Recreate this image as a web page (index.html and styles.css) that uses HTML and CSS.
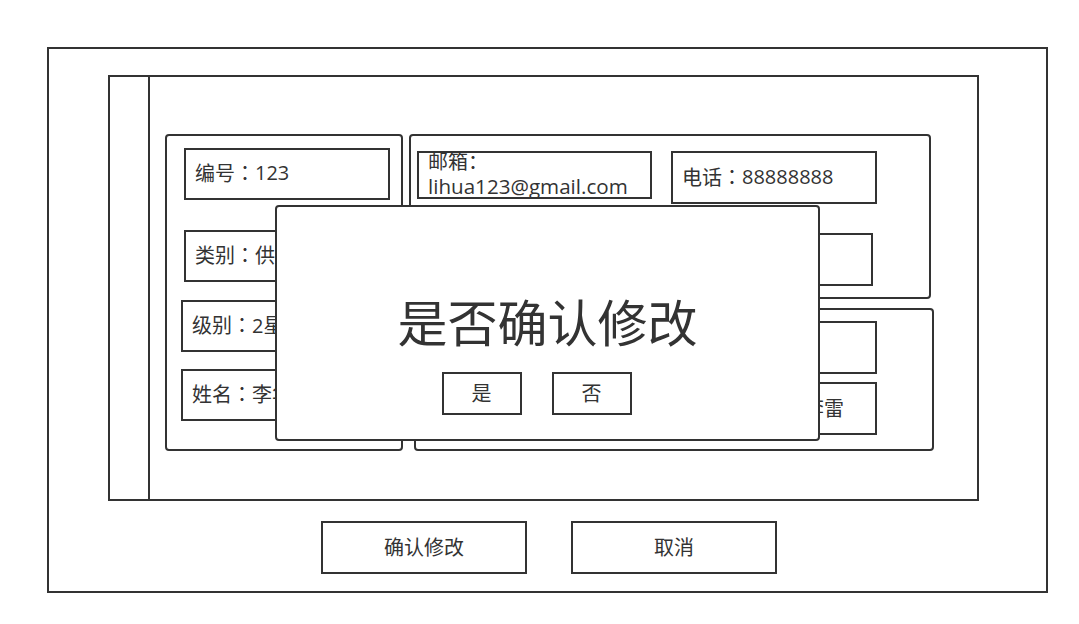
FILE: index.html
```html
<!DOCTYPE html>
<html lang="zh-CN">
<head>
<meta charset="utf-8">
<title>确认修改</title>
<link rel="stylesheet" href="styles.css">
</head>
<body>
<div class="frame">
  <div class="window">
    <div class="sidebar"></div>
    <div class="content">
      <div class="panel panel-left">
        <div class="field f1">编号<span class="colon">：</span>123</div>
        <div class="field f2">类别<span class="colon">：</span>供应商</div>
        <div class="field f3">级别<span class="colon">：</span>2星</div>
        <div class="field f4">姓名<span class="colon">：</span>李华</div>
      </div>
      <div class="right-col">
        <div class="panel panel-top">
          <div class="row">
            <div class="field field-email"><span class="two-line">邮箱<span class="colon">：</span><br><span class="mail">lihua123@gmail.com</span></span></div>
            <div class="field field-phone">电话<span class="colon">：</span>88888888</div>
          </div>
          <div class="field field-addr">地址<span class="colon">：</span>北京</div>
        </div>
        <div class="panel panel-bottom">
          <div class="field field-b1">公司<span class="colon">：</span>XX</div>
          <div class="field field-b2">联系人姓名<span class="colon">：</span>李雷</div>
        </div>
      </div>
    </div>
  </div>
  <div class="actions">
    <div class="btn">确认修改</div>
    <div class="btn">取消</div>
  </div>
  <div class="dialog">
    <div class="dialog-title">是否确认修改</div>
    <div class="dialog-buttons">
      <div class="dbtn">是</div>
      <div class="dbtn">否</div>
    </div>
  </div>
</div>
</body>
</html>
```

FILE: styles.css
```css
* { box-sizing: border-box; }
html, body { margin: 0; padding: 0; background: #fff; }
body {
  width: 1079px;
  height: 624px;
  font-family: "Open Sans", "Noto Sans CJK SC", sans-serif;
  color: #333;
  overflow: hidden;
}
.colon {
  font-family: "Noto Sans CJK TC", "Noto Sans CJK SC", sans-serif;
}
.frame {
  position: relative;
  margin: 47px 0 0 47px;
  width: 1001px;
  height: 546px;
  border: 2px solid #333;
}
.window {
  display: flex;
  margin: 26px 0 0 59px;
  width: 871px;
  height: 426px;
  border: 2px solid #333;
}
.sidebar {
  width: 40px;
  flex: none;
  border-right: 2px solid #333;
}
.content {
  display: flex;
  align-items: flex-start;
  padding: 57px 0 0 15px;
}
.panel {
  border: 2px solid #333;
  border-radius: 4px;
  flex: none;
}
.panel-left {
  width: 238px;
  height: 317px;
  display: flex;
  flex-direction: column;
}
.field {
  display: flex;
  align-items: center;
  width: 206px;
  height: 52px;
  border: 2px solid #333;
  padding: 0 0 3px 9px;
  font-size: 20px;
  white-space: nowrap;
  overflow: hidden;
  flex: none;
}
.f1 { margin: 12px 0 0 17px; }
.f2 { margin: 30px 0 0 17px; }
.f3 { margin: 18px 0 0 14px; }
.f4 { margin: 17px 0 0 14px; }
.right-col {
  display: flex;
  flex-direction: column;
  margin-left: 6px;
}
.panel-top {
  width: 522px;
  height: 165px;
  display: flex;
  flex-direction: column;
  align-items: flex-start;
}
.row {
  display: flex;
  align-items: flex-start;
  margin-top: 15px;
}
.field-email {
  width: 235px;
  height: 48px;
  margin-left: 6px;
  padding: 0 0 2px 9px;
  overflow: visible;
}
.two-line {
  display: block;
  line-height: 24px;
  white-space: nowrap;
}
.mail {
  font-size: 20.6px;
}
.field-phone {
  height: 53px;
  margin-left: 19px;
}
.field-addr {
  height: 53px;
  margin: 29px 0 0 256px;
}
.panel-bottom {
  width: 520px;
  height: 143px;
  margin: 9px 0 0 5px;
  display: flex;
  flex-direction: column;
}
.field-b1 { width: 207px; height: 53px; margin: 11px 0 0 254px; }
.field-b2 { width: 207px; height: 53px; margin: 8px 0 0 254px; padding-left: 12px; }
.actions {
  display: flex;
  gap: 44px;
  margin: 20px 0 0 272px;
}
.btn {
  width: 206px;
  height: 53px;
  border: 2px solid #333;
  display: flex;
  align-items: center;
  justify-content: center;
  padding-bottom: 2px;
  font-size: 20px;
}
.dialog {
  position: absolute;
  left: 226px;
  top: 156px;
  width: 545px;
  height: 236px;
  background: #fff;
  border: 2px solid #333;
  border-radius: 4px;
  display: flex;
  flex-direction: column;
  align-items: center;
  padding-top: 86px;
}
.dialog-title {
  font-size: 50px;
  line-height: 60px;
  white-space: nowrap;
}
.dialog-buttons {
  display: flex;
  gap: 30px;
  margin-top: 19px;
  padding-right: 22px;
}
.dbtn {
  width: 80px;
  height: 43px;
  border: 2px solid #333;
  display: flex;
  align-items: center;
  justify-content: center;
  padding-bottom: 2px;
  font-size: 20px;
}
```
